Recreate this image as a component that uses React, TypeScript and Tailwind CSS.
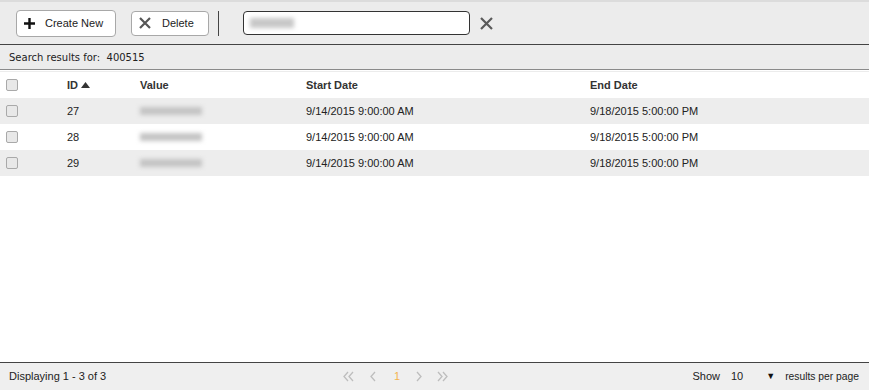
import { useState } from "react";

interface Row {
    id: number,
    start: string,
    end: string,
}

const rows: Row[] = [
    {id: 27, start: "9/14/2015 9:00:00 AM", end: "9/18/2015 5:00:00 PM"},
    {id: 28, start: "9/14/2015 9:00:00 AM", end: "9/18/2015 5:00:00 PM"},
    {id: 29, start: "9/14/2015 9:00:00 AM", end: "9/18/2015 5:00:00 PM"},
];

function Check() {
    return <span className="block h-[12px] w-[12px] rounded-[2px] border border-[#a9a9a9] bg-[#e8e8e8]"/>;
}

function Chevron({double, left}: {double?: boolean, left?: boolean}) {
    const d = left
        ? (double ? "M5 1L1 5.5L5 10M10 1L6 5.5L10 10" : "M5 1L1 5.5L5 10")
        : (double ? "M1 1L5 5.5L1 10M6 1L10 5.5L6 10" : "M1 1L5 5.5L1 10");
    return (
        <svg width={double ? 11 : 6} height="11" viewBox={double ? "0 0 11 11" : "0 0 6 11"}>
            <path d={d} stroke="#bdbdbd" strokeWidth="1.3" fill="none"/>
        </svg>
    );
}

export default function App() {
    const [query] = useState("400515");

    return (
        <div className="flex h-[390px] w-[869px] flex-col bg-white font-['Liberation_Sans',Arial,sans-serif] text-[11px] text-[#222]">
            <div className="h-[2px] bg-[#dcdcdc]"/>
            <div className="flex h-[43px] items-center border-b border-[#444] bg-[#ececec] pl-[16px]">
                <button type="button"
                        className="flex h-[27px] w-[100px] items-center rounded-[4px] border border-[#a8a8a8] bg-white pl-[7px] text-[11px] text-[#222]">
                    <svg width="11" height="11" viewBox="0 0 11 11" className="mr-[10px]">
                        <path d="M5.5 0v11M0 5.5h11" stroke="#111" strokeWidth="2.4"/>
                    </svg>
                    Create New
                </button>
                <button type="button"
                        className="ml-[15px] flex h-[25px] w-[78px] items-center rounded-[4px] border border-[#a8a8a8] bg-white pl-[7px] text-[11px] text-[#222]">
                    <svg width="12" height="12" viewBox="0 0 12 12" className="mr-[11px]">
                        <path d="M1 1l10 10M11 1l-10 10" stroke="#555" strokeWidth="2.2"/>
                    </svg>
                    Delete
                </button>
                <span className="ml-[9px] h-[25px] w-[1px] bg-[#444]"/>
                <div className="ml-[24px] flex h-[24px] w-[227px] items-center rounded-[4px] border border-[#333] bg-white pl-[6px]">
                    <span className="block h-[10px] w-[44px] bg-[#c8c8c8] blur-[2px]" title={query}/>
                </div>
                <svg width="13" height="13" viewBox="0 0 13 13" className="ml-[10px]">
                    <path d="M1 1l11 11M12 1l-11 11" stroke="#5a5a5a" strokeWidth="2.2"/>
                </svg>
            </div>
            <div className="flex h-[25px] items-center border-b border-[#8a8a8a] bg-[#ececec] pl-[9px] font-['DejaVu_Sans',Verdana,sans-serif] text-[10px] text-[#222]">
                Search results for:&nbsp; {query}
            </div>
            <div className="h-[2px] border-b border-[#ececec] bg-white"/>

            <div className="flex-1">
                <div className="flex h-[26px] items-center font-bold text-[#333]">
                    <div className="w-[67px] pl-[6px]"><Check/></div>
                    <div className="flex w-[73px] items-center">
                        ID
                        <svg width="9" height="6" viewBox="0 0 9 6" className="ml-[3px]">
                            <path d="M0 6L4.5 0L9 6Z" fill="#333"/>
                        </svg>
                    </div>
                    <div className="w-[166px]">Value</div>
                    <div className="w-[284px]">Start Date</div>
                    <div>End Date</div>
                </div>
                {rows.map((r, i) => (
                    <div key={r.id}
                         className={`flex h-[26px] items-center ${i % 2 === 0 ? "bg-[#ededed]" : "bg-white"}`}>
                        <div className="w-[67px] pl-[6px]"><Check/></div>
                        <div className="w-[73px]">{r.id}</div>
                        <div className="w-[166px]">
                            <span className="block h-[8px] w-[62px] bg-[#c4c4c4] blur-[2px]"/>
                        </div>
                        <div className="w-[284px]">{r.start}</div>
                        <div>{r.end}</div>
                    </div>
                ))}
            </div>

            <div className="flex h-[28px] items-center border-t border-[#444] bg-[#efefef] pl-[9px] pr-[10px] text-[#222]">
                <div className="w-[334px]">Displaying 1 - 3 of 3</div>
                <div className="flex items-center">
                    <Chevron double left/>
                    <span className="ml-[16px]"><Chevron left/></span>
                    <span className="ml-[18px] text-[11px] text-[#f4b350]">1</span>
                    <span className="ml-[16px]"><Chevron/></span>
                    <span className="ml-[15px]"><Chevron double/></span>
                </div>
                <div className="ml-auto flex items-center">
                    <span>Show</span>
                    <span className="ml-[11px]">10</span>
                    <span className="ml-[23px] text-[9px] text-[#111]">▼</span>
                    <span className="ml-[10px] text-[10.3px]">results per page</span>
                </div>
            </div>
        </div>
    )
}
